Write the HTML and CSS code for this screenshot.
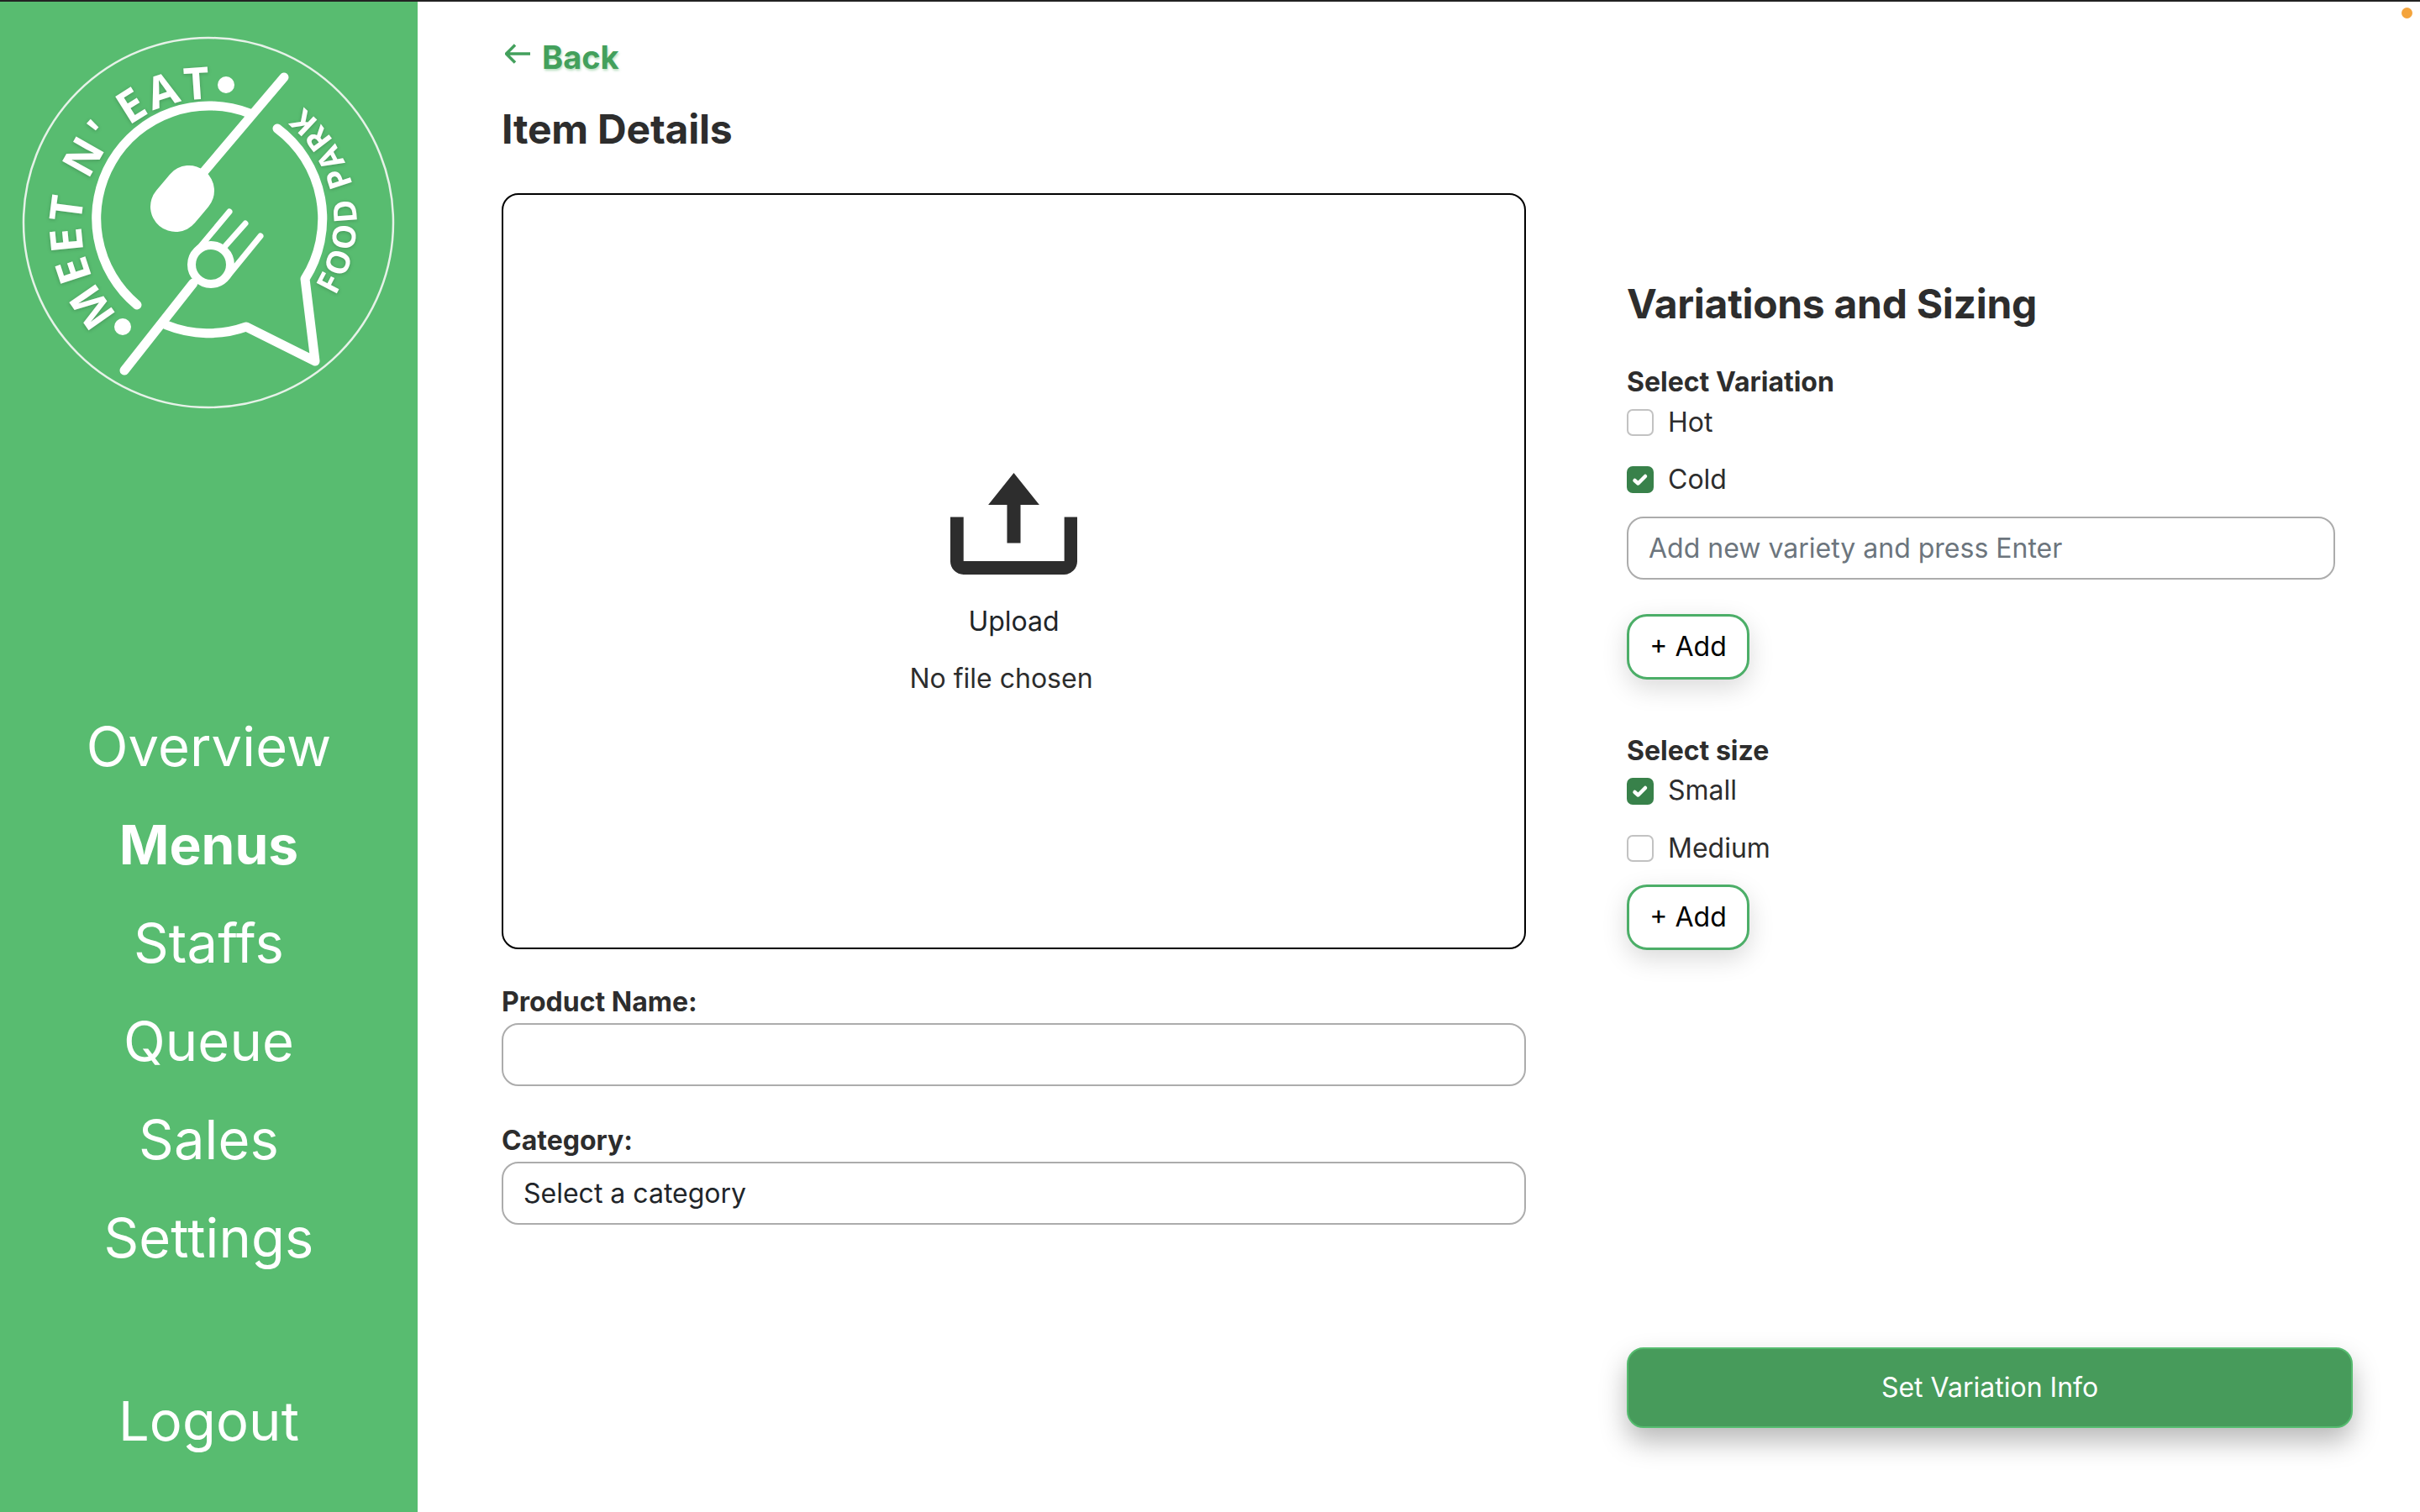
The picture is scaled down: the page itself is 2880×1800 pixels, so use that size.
FILE: index.html
```html
<!DOCTYPE html>
<html lang="en">
<head>
<meta charset="utf-8">
<title>Item Details</title>
<link rel="stylesheet" href="styles.css">
</head>
<body>
<div class="topline"></div>
<div class="app">
  <aside class="sidebar">
    <svg class="logo" viewBox="0 2 497 500" width="497" height="500">
      <circle class="logo-ring" cx="248" cy="265" r="220"/>
      <defs>
        <path id="arcTop" d="M141,374 A150,150 0 0 1 286,123"/>
        <path id="arcRight" d="M399,352 A174,174 0 0 0 337,111"/>
      </defs>
      <g class="logo-text-group">
        <text class="logo-text-big"><textPath href="#arcTop">MEET N' EAT</textPath></text>
        <text class="logo-text-small"><textPath href="#arcRight">FOOD PARK</textPath></text>
      </g>
      <circle class="logo-fill" cx="269" cy="101" r="10"/>
      <circle class="logo-fill" cx="146" cy="389" r="10"/>
      <path class="logo-line" d="M163,363 A134,134 0 0 1 297,135"/>
      <path class="logo-line" d="M330,153 A134,134 0 0 1 363,332 L375,430 L293,389 A134,134 0 0 1 198,387"/>
      <path class="logo-line" d="M338,92 L243,204"/>
      <path class="logo-head" d="M225,227 L209,246"/>
      <circle class="logo-ring-fork" cx="251" cy="315" r="23"/>
      <path class="logo-line" d="M230,337 L148,441"/>
      <path class="logo-tine" d="M273,252 L233,300 M292,266 L268,293 M310,281 L270,330"/>
    </svg>
    <nav class="nav">
      <a class="nav-item">Overview</a>
      <a class="nav-item active">Menus</a>
      <a class="nav-item">Staffs</a>
      <a class="nav-item">Queue</a>
      <a class="nav-item">Sales</a>
      <a class="nav-item">Settings</a>
    </nav>
    <a class="nav-item logout">Logout</a>
  </aside>

  <main class="main">
    <section class="col-left">
      <a class="back">
        <svg class="back-arrow" viewBox="0 0 30 24" width="30" height="24"><path d="M12 1.500 1.500 12 12 22.500M2 12h28"/></svg>
        <span>Back</span>
      </a>
      <h1 class="page-title">Item Details</h1>
      <div class="upload-box">
        <svg class="upload-icon" viewBox="273 100 452 362" width="151" height="121">
          <path d="M273 257h47v157h359V257h46v158a47 47 0 0 1-47 47H320a47 47 0 0 1-47-47z"/>
          <path d="M499 100l91 114h-67v136h-48V214h-67z"/>
        </svg>
        <div class="upload-label">Upload</div>
        <div class="upload-file">No file chosen</div>
      </div>
      <label class="field-label first">Product Name:</label>
      <input class="text-input" type="text">
      <label class="field-label second">Category:</label>
      <select class="text-input select-input"><option>Select a category</option></select>
    </section>

    <section class="col-right">
      <h2 class="section-title">Variations and Sizing</h2>
      <div class="group-label first-group">Select Variation</div>
      <div class="check-row"><span class="check"></span><span>Hot</span></div>
      <div class="check-row next"><span class="check on"><svg viewBox="0 0 32 32" width="32" height="32"><path d="M9.500 17 13.500 20.500 22 12"/></svg></span><span>Cold</span></div>
      <input class="text-input variety" type="text" placeholder="Add new variety and press Enter">
      <button class="add-btn add-one">+ Add</button>
      <div class="group-label size-group">Select size</div>
      <div class="check-row"><span class="check on"><svg viewBox="0 0 32 32" width="32" height="32"><path d="M9.500 17 13.500 20.500 22 12"/></svg></span><span class="tight">Small</span></div>
      <div class="check-row next"><span class="check"></span><span>Medium</span></div>
      <button class="add-btn add-two">+ Add</button>
      <button class="submit-btn">Set Variation Info</button>
    </section>
  </main>
</div>
<span class="status-dot"></span>
</body>
</html>
```
FILE: styles.css
```css
* { box-sizing: border-box; }
html, body { margin: 0; height: 100%; overflow: hidden; }
body {
  font-family: Inter, "Liberation Sans", sans-serif;
  font-size: 32px;
  color: #2d2d2d;
  background: #fff;
  position: relative;
}
.topline { height: 2px; background: #222; }
.app { display: flex; height: 1798px; }

.sidebar {
  width: 497px;
  flex: none;
  background: #58bc70;
  display: flex;
  flex-direction: column;
  align-items: center;
  padding-bottom: 50px;
}
.logo { display: block; flex: none; }
.logo-ring { fill: none; stroke: #e6f2e8; stroke-width: 2.5; }
.logo-fill { fill: #fff; }
.logo-line { fill: none; stroke: #fff; stroke-width: 11; stroke-linecap: round; stroke-linejoin: round; }
.logo-head { fill: none; stroke: #fff; stroke-width: 60; stroke-linecap: round; }
.logo-ring-fork { fill: none; stroke: #fff; stroke-width: 10; }
.logo-tine { fill: none; stroke: #fff; stroke-width: 7; stroke-linecap: round; }
.logo-text-group { filter: drop-shadow(0 1px 2px rgba(0, 0, 0, .2)); }
.logo-text-big { font-family: "Open Sans", sans-serif; font-weight: 700; font-size: 53px; letter-spacing: 3.5px; fill: #fff; }
.logo-text-small { font-family: "Open Sans", sans-serif; font-weight: 700; font-size: 38px; letter-spacing: 3.5px; fill: #fff; }

.nav { margin-top: 327.5px; display: flex; flex-direction: column; align-items: center; }
.nav-item { display: block; height: 117.2px; line-height: 117.2px; font-size: 65px; letter-spacing: .15px; color: #fff; text-align: center; }
.nav-item.active { font-weight: 700; letter-spacing: 0; font-size: 64px; }
.logout { margin-top: auto; }

.main { flex: 1; display: flex; padding-left: 100px; gap: 120px; min-width: 0; }
.col-left { width: 1219px; flex: none; display: flex; flex-direction: column; }
.col-right { width: 864px; flex: none; display: flex; flex-direction: column; align-items: flex-start; padding-bottom: 100px; }

.back {
  margin-top: 42px;
  display: flex;
  align-items: center;
  gap: 14px;
  height: 48px;
  padding-left: 4px;
  font-size: 38px;
  font-weight: 700;
  color: #43a05c;
  text-shadow: 1px 2px 3px rgba(70, 170, 90, .4);
}
.back-arrow { fill: none; stroke: #43a05c; stroke-width: 3.5; position: relative; top: -4px; }
.page-title { margin: 33px 0 47px; font-size: 48px; line-height: 58px; font-weight: 700; letter-spacing: -.2px; }

.upload-box {
  height: 900px;
  border: 2px solid #000;
  border-radius: 20px;
  display: flex;
  flex-direction: column;
  align-items: center;
  padding-top: 331px;
}
.upload-icon { fill: #2d2d2d; display: block; }
.upload-label { margin-top: 32px; line-height: 48px; color: #212529; }
.upload-file { margin-top: 20px; margin-right: 30px; line-height: 48px; }

.field-label { display: block; line-height: 48px; font-weight: 700; }
.field-label.first { margin-top: 39px; }
.field-label.second { margin-top: 41px; }
.field-label + .text-input { margin-top: 1px; }

.text-input {
  display: block;
  width: 100%;
  height: 75px;
  margin: 0;
  padding: 0 24px;
  border: 2px solid #acacac;
  border-radius: 20px;
  background: #fff;
  font: inherit;
  color: #212529;
  appearance: none;
  outline: none;
}
.text-input::placeholder { color: #6c757d; opacity: 1; }
.variety { width: 843px; margin-top: 28px; }

.section-title { margin: 331px 0 0; font-size: 48px; line-height: 58px; font-weight: 700; letter-spacing: -.3px; }
.group-label { line-height: 48px; font-weight: 700; }
.first-group { margin-top: 40px; }
.size-group { margin-top: 61px; }

.check-row { display: flex; align-items: center; gap: 17px; height: 32px; margin-top: 8px; line-height: 32px; }
.check-row.next { margin-top: 36px; }
.check { width: 32px; height: 32px; border: 2px solid #c2c2c2; border-radius: 7px; background: #fff; flex: none; }
.check.on { border: 0; background: #38814a; }
.check svg { display: block; fill: none; stroke: #fff; stroke-width: 4.5; stroke-linecap: round; stroke-linejoin: round; }
.tight { margin-top: -2px; }

.add-btn {
  display: block;
  width: 146px;
  height: 78px;
  padding: 0 0 2px;
  border: 3px solid #4cae68;
  border-radius: 24px;
  background: #fff;
  font: inherit;
  color: #000;
  box-shadow: 0 10px 30px rgba(0, 0, 0, .15);
}
.add-one { margin-top: 41px; }
.add-two { margin-top: 27px; }

.submit-btn {
  display: block;
  width: 864px;
  height: 96px;
  margin-top: auto;
  padding: 0 0 2px;
  border: 2px solid #55bc6f;
  border-radius: 20px;
  background: #479b5b;
  font: inherit;
  color: #fff;
  box-shadow: 0 16px 32px rgba(0, 0, 0, .28);
}

.status-dot { position: absolute; left: 2858px; top: 9px; width: 13px; height: 13px; border-radius: 50%; background: #f4a43c; }
```
